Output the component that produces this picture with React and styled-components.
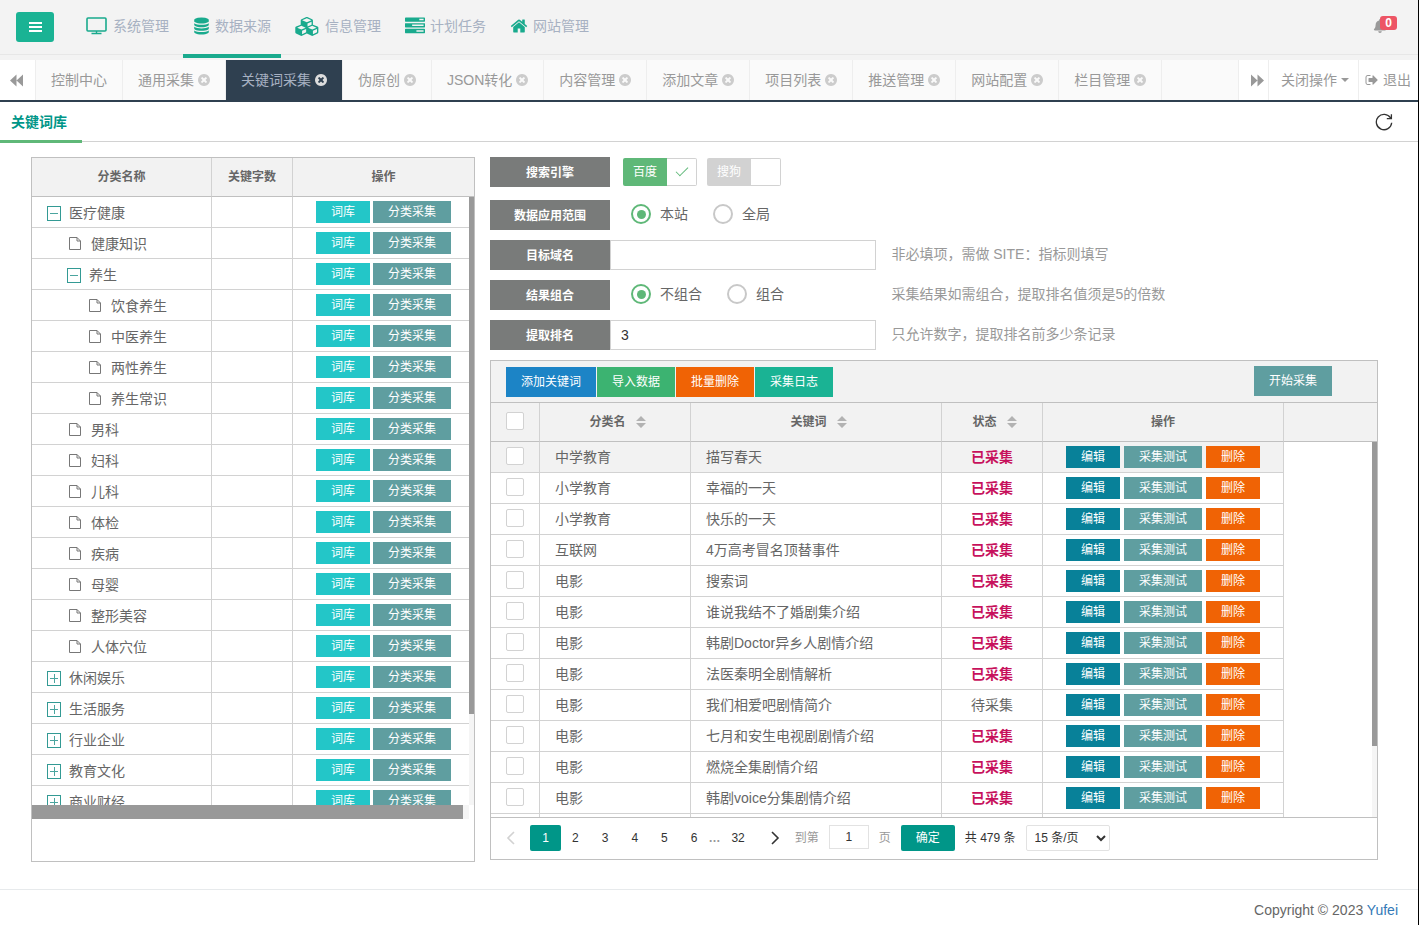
import React from "react";
import styled, { createGlobalStyle, css } from "styled-components";
import { FaBell } from "react-icons/fa";

const GlobalStyle = createGlobalStyle`
  *, *::before, *::after { box-sizing: border-box; }
  body {
    margin: 0;
    background: #fff;
    color: #666;
    font: 14px/20px "Liberation Sans", "Noto Sans CJK SC", sans-serif;
  }
  button, input, select { font: inherit; margin: 0; }
  button { cursor: pointer; }
`;

const ICONS = {
  database: [1792, "M896 768q237 0 443-43t325-127v170q0 69-103 128t-280 93.5-385 34.5-385-34.5-280-93.5-103-128v-170q119 84 325 127t443 43zm0 768q237 0 443-43t325-127v170q0 69-103 128t-280 93.5-385 34.5-385-34.5-280-93.5-103-128v-170q119 84 325 127t443 43zm0-384q237 0 443-43t325-127v170q0 69-103 128t-280 93.5-385 34.5-385-34.5-280-93.5-103-128v-170q119 84 325 127t443 43zm0-1152q208 0 385 34.5t280 93.5 103 128v128q0 69-103 128t-280 93.5-385 34.5-385-34.5-280-93.5-103-128v-128q0-69 103-128t280-93.5 385-34.5z"],
  cubes: [2304, "M640 1632l384-192v-314l-384 164v342zm-64-454l404-173-404-173-404 173zm1088 454l384-192v-314l-384 164v342zm-64-454l404-173-404-173-404 173zm-448-293l384-165v-266l-384 164v267zm-64-379l441-189-441-189-441 189zm1088 518v416q0 36-19 67t-52 47l-448 224q-25 14-57 14t-57-14l-448-224q-4-2-7-4-2 2-7 4l-448 224q-25 14-57 14t-57-14l-448-224q-33-16-52-47t-19-67v-416q0-38 21.5-70t56.5-48l434-186v-400q0-38 21.5-70t56.5-48l448-192q23-10 50-10t50 10l448 192q35 16 56.5 48t21.5 70v400l434 186q36 16 57 48t21 70z"],
  tasks: [1792, "M1024 1408h640v-128h-640v128zm-384-512h1024v-128h-1024v128zm640-512h384v-128h-384v128zm512 832v256q0 26-19 45t-45 19h-1664q-26 0-45-19t-19-45v-256q0-26 19-45t45-19h1664q26 0 45 19t19 45zm0-512v256q0 26-19 45t-45 19h-1664q-26 0-45-19t-19-45v-256q0-26 19-45t45-19h1664q26 0 45 19t19 45zm0-512v256q0 26-19 45t-45 19h-1664q-26 0-45-19t-19-45v-256q0-26 19-45t45-19h1664q26 0 45 19t19 45z"],
  home: [1792, "M1472 992v480q0 26-19 45t-45 19h-384v-384h-256v384h-384q-26 0-45-19t-19-45v-480q0-1 .5-3t.5-3l575-474 575 474q1 2 1 6zm223-69l-62 74q-8 9-21 11h-3q-13 0-21-7l-692-577-692 577q-12 8-24 7-13-2-21-11l-62-74q-8-10-7-23.5t11-21.5l719-599q32-26 76-26t76 26l244 204v-195q0-14 9-23t23-9h192q14 0 23 9t9 23v408l219 182q10 8 11 21.5t-7 23.5z"],
  close: [1792, "M1277 1122q0-26-19-45l-181-181 181-181q19-19 19-45 0-27-19-46l-90-90q-19-19-46-19-26 0-45 19l-181 181-181-181q-19-19-45-19-27 0-46 19l-90 90q-19 19-19 46 0 26 19 45l181 181-181 181q-19 19-19 45 0 27 19 46l90 90q19 19 46 19 26 0 45-19l181-181 181 181q19 19 45 19 27 0 46-19l90-90q19-19 19-46zm387-226q0 209-103 385.5t-279.5 279.5-385.5 103-385.5-103-279.5-279.5-103-385.5 103-385.5 279.5-279.5 385.5-103 385.5 103 279.5 279.5 103 385.5z"],
  signOut: [1792, "M704 1440q0 4 1 20t.5 26.5-3 23.5-10 19.5-20.5 6.5h-320q-119 0-203.5-84.5t-84.5-203.5v-704q0-119 84.5-203.5t203.5-84.5h320q13 0 22.5 9.5t9.5 22.5q0 4 1 20t.5 26.5-3 23.5-10 19.5-20.5 6.5h-320q-66 0-113 47t-47 113v704q0 66 47 113t113 47h312l11.5 1 11.5 3 8 5.5 7 9 2 13.5zm928-544q0 26-19 45l-544 544q-19 19-45 19t-45-19-19-45v-288h-448q-26 0-45-19t-19-45v-384q0-26 19-45t45-19h448v-288q0-26 19-45t45-19 45 19l544 544q19 19 19 45z"],
};

const Glyph = ({ name, size, width, crop = 0 }) => {
  const [w, d] = ICONS[name];
  return (
    <svg
      width={width || size}
      height={size}
      viewBox={`${crop} ${crop} ${w - 2 * crop} ${1792 - 2 * crop}`}
      fill="currentColor"
      aria-hidden="true"
    >
      <path d={d} />
    </svg>
  );
};

const MonitorIcon = () => (
  <svg width="22" height="18" viewBox="0 0 22 18" fill="none" stroke="currentColor" aria-hidden="true">
    <rect x="1" y="1" width="19" height="13" rx="1" strokeWidth="1.6" />
    <path d="M10.500 14v2.500M5.500 16.500h10" strokeWidth="1.400" />
  </svg>
);

const Backward = () => (
  <svg width="13" height="13" viewBox="0 0 13 13" fill="currentColor" aria-hidden="true">
    <path d="M6.500 0.500v12L0 6.500zM13 0.500v12L6.500 6.500z" />
  </svg>
);
const Forward = () => (
  <svg width="13" height="13" viewBox="0 0 13 13" fill="currentColor" aria-hidden="true">
    <path d="M0 0.500v12L6.500 6.500zM6.500 0.500v12L13 6.500z" />
  </svg>
);
const RefreshIcon = () => (
  <svg width="18" height="18" viewBox="0 0 18 18" fill="none" stroke="currentColor" strokeWidth="1.300" aria-hidden="true">
    <path d="M15.600 5A7.700 7.700 0 1 0 16.700 9.800M16.400 1.200V5.700H11.800" />
  </svg>
);
const FileIcon = () => (
  <svg width="12" height="14" viewBox="0 0 12 14" fill="none" stroke="#777" aria-hidden="true">
    <path d="M0.500 0.500H8L11.500 4V12.500H0.500zM8 0.500V4H11.500" />
  </svg>
);
const Chevron = ({ d }) => (
  <svg width="10" height="14" viewBox="0 0 10 14" fill="none" stroke="currentColor" strokeWidth="1.600" aria-hidden="true">
    <path d={d} />
  </svg>
);
const SortIcon = () => (
  <svg width="10" height="12" viewBox="0 0 10 12" fill="#b2b2b2" aria-hidden="true">
    <path d="M5 0L10 5H0zM5 12L10 7H0z" />
  </svg>
);

const Page = styled.div`
  border-right: 1px solid #000;
  min-height: 100vh;
`;

const Header = styled.header`
  height: 60px;
  padding: 0 21px 0 16px;
  background: linear-gradient(#e7e7e7, #e7e7e7) 0 54px / 100% 1px no-repeat #f3f3f3;
  display: flex;
  align-items: flex-start;
`;
const MenuButton = styled.button`
  width: 38px;
  height: 30px;
  margin: 12px 22px 0 0;
  padding: 0;
  border: 0;
  border-radius: 3px;
  background: #1ab394;
  display: flex;
  flex-direction: column;
  align-items: center;
  justify-content: center;
  gap: 2px;
`;
const MenuLine = styled.span`
  width: 13px;
  height: 2px;
  background: #fff;
`;
const Nav = styled.nav`
  display: flex;
  gap: 4px;
  flex: 1;
`;
const NavItem = styled.a`
  height: 58px;
  padding: 0 10px 2px;
  display: flex;
  align-items: center;
  gap: 5px;
  color: #a7b1c2;
  text-decoration: none;
  white-space: nowrap;
  border-bottom: 4px solid ${(p) => (p.$active ? "#19aa8d" : "transparent")};
  svg { color: #19aa8d; flex: none; }
`;
const Bell = styled.a`
  position: relative;
  margin-top: 19px;
  width: 24px;
  height: 14px;
  color: #999;
  svg { display: block; }
`;
const Badge = styled.span`
  position: absolute;
  left: 7px;
  top: -3px;
  width: 17px;
  height: 14px;
  border-radius: 3px;
  background: #ed5565;
  color: #fff;
  font: bold 12px/14px "Liberation Sans", sans-serif;
  text-align: center;
`;

const TabBar = styled.div`
  display: flex;
  height: 42px;
  background: #fafafa;
  border-bottom: 2px solid #2f4050;
  color: #999;
`;
const TabEdge = styled.button`
  border: 0;
  border-right: ${(p) => (p.$end ? 0 : "1px solid #eee")};
  background: #fff;
  color: #999;
  height: 40px;
  padding: ${(p) => p.$pad};
  display: flex;
  align-items: center;
  gap: 4px;
  white-space: nowrap;
`;
const TabList = styled.div`
  display: flex;
  flex: 1;
  min-width: 0;
  overflow: hidden;
  border-right: 1px solid #eee;
`;
const Tab = styled.a`
  flex: none;
  height: 40px;
  padding: 0 15px;
  display: flex;
  align-items: center;
  gap: 4px;
  border-right: 1px solid #eee;
  text-decoration: none;
  white-space: nowrap;
  color: ${(p) => (p.$active ? "#a7b1c2" : "#999")};
  background: ${(p) => (p.$active ? "#2f4050" : "#fafafa")};
  svg { color: ${(p) => (p.$active ? "#ddd" : "#ccc")}; }
`;
const Caret = styled.span`
  border: 4px solid transparent;
  border-top-color: currentColor;
  border-bottom: 0;
`;

const SubTabs = styled.div`
  display: flex;
  justify-content: space-between;
  align-items: flex-start;
  height: 40px;
  border-bottom: 1px solid #d2d2d2;
  padding-right: 25px;
`;
const SubTab = styled.a`
  height: 41px;
  padding: 10px 15px 0 11px;
  border-bottom: 3px solid #5fb878;
  color: #009688;
  font-weight: bold;
  text-decoration: none;
`;
const IconButton = styled.button`
  border: 0;
  padding: 0;
  margin-top: 11px;
  background: none;
  color: #333;
  display: flex;
`;

const Main = styled.main`
  display: grid;
  grid-template-columns: minmax(0, 1fr) minmax(0, 2fr);
  gap: 15px;
  padding: 15px 40px 27px 31px;
`;
const Panel = styled.section`
  border: 1px solid #c0c0c0;
`;
const LeftPanel = styled(Panel)`
  padding-bottom: 42px;
`;
const ScrollBox = styled.div`
  position: relative;
  height: ${(p) => p.$height};
  overflow: hidden;
`;
const VTrack = styled.div`
  position: absolute;
  top: 39px;
  right: 0;
  bottom: 0;
  width: 5px;
  background: #f5f5f5;
`;
const VThumb = styled.div`
  height: ${(p) => p.$size};
  background: #999;
`;
const HTrack = styled.div`
  height: 14px;
  margin-right: 5px;
  background: #f5f5f5;
`;
const HThumb = styled.div`
  width: calc(100% - 6px);
  height: 14px;
  background: #999;
`;

const Table = styled.table`
  width: 100%;
  table-layout: fixed;
  border-collapse: separate;
  border-spacing: 0;
`;
const Th = styled.th`
  width: ${(p) => p.$w || "auto"};
  height: 39px;
  padding: 0;
  background: #f2f2f2;
  border-bottom: 1px solid #c0c0c0;
  border-right: ${(p) => (p.$last ? 0 : "1px solid #d2d2d2")};
  font-size: 12px;
`;
const Sortable = styled.span`
  display: flex;
  justify-content: center;
  align-items: center;
  gap: 10px;
  padding-left: 5px;
`;
const Td = styled.td`
  height: 31px;
  padding: ${(p) => (p.$center ? 0 : "0 15px")};
  text-align: ${(p) => (p.$center ? "center" : "left")};
  border-bottom: 1px solid #d2d2d2;
  border-right: ${(p) => (p.$last ? 0 : "1px solid #d2d2d2")};
  background: ${(p) => (p.$hover ? "#f2f2f2" : "#fff")};
  white-space: nowrap;
`;
const TreeCell = styled.div`
  display: flex;
  align-items: center;
  height: 30px;
  gap: ${(p) => (p.$leaf ? "10px" : "8px")};
  padding: 2px 0 0 ${(p) => p.$level * 20 + (p.$leaf ? 2 : 0)}px;
`;
const Toggle = styled.button`
  position: relative;
  width: 14px;
  height: 15px;
  padding: 0;
  border: 1px solid #339a94;
  background: #fff;
  &::before, &::after {
    content: "";
    position: absolute;
    background: #4ba59f;
  }
  &::before { left: 2px; right: 2px; top: 6px; height: 1px; }
  ${(p) => !p.$open && css`&::after { top: 2px; bottom: 2px; left: 6px; width: 1px; }`}
`;
const Actions = styled.div`
  display: flex;
  justify-content: center;
  gap: ${(p) => p.$gap};
`;
const Button = styled.button`
  border: 0;
  padding: 0 15px;
  height: ${(p) => (p.$small ? "22px" : "30px")};
  line-height: ${(p) => (p.$small ? "22px" : "30px")};
  font-size: 12px;
  color: #fff;
  white-space: nowrap;
  background: ${(p) => p.$bg};
`;

const FormRow = styled.div`
  display: flex;
  align-items: center;
  height: 30px;
  margin-bottom: ${(p) => (p.$first ? "13px" : "10px")};
`;
const FieldLabel = styled.label`
  flex: none;
  width: 120px;
  height: 30px;
  line-height: 32px;
  background: #797b7a;
  color: #fff;
  font-size: 12px;
  font-weight: bold;
  text-align: center;
`;
const Field = styled.div`
  flex: none;
  width: 30%;
  display: flex;
  align-items: center;
`;
const TextInput = styled.input`
  width: 100%;
  height: 30px;
  border: 1px solid #d2d2d2;
  padding: 0 10px;
  color: #333;
  background: #fff;
`;
const Hint = styled.span`
  margin-left: 15px;
  padding-bottom: 2px;
  color: #999;
`;
const Switch = styled.label`
  display: flex;
  height: 28px;
  margin-left: ${(p) => (p.$first ? "13px" : "10px")};
  line-height: 28px;
  font-size: 12px;
  color: #fff;
`;
const SwitchText = styled.span`
  width: 44px;
  text-align: center;
  border-radius: 2px 0 0 2px;
  background: ${(p) => (p.$on ? "#5fb878" : "#d2d2d2")};
`;
const SwitchBox = styled.input`
  appearance: none;
  width: 30px;
  height: 28px;
  border: 1px solid #d2d2d2;
  border-left: 0;
  border-radius: 0 2px 2px 0;
  display: grid;
  place-items: center;
  &:checked::after {
    content: "";
    width: 12px;
    height: 6px;
    margin-bottom: 4px;
    border: solid #5fb878;
    border-width: 0 0 1px 1px;
    transform: rotate(-45deg);
  }
`;
const RadioGroup = styled.div`
  display: flex;
  gap: 25px;
  padding: 0 0 2px 21px;
`;
const RadioLabel = styled.label`
  display: flex;
  align-items: center;
  gap: 9px;
  white-space: nowrap;
  height: 28px;
`;
const Radio = styled.input`
  appearance: none;
  width: 20px;
  height: 20px;
  border: 2px solid #c8c8c8;
  border-radius: 50%;
  display: grid;
  place-items: center;
  &:checked { border-color: #5fb878; }
  &:checked::after {
    content: "";
    width: 9px;
    height: 9px;
    border-radius: 50%;
    background: #5fb878;
  }
`;
const CheckBox = styled.input`
  appearance: none;
  display: block;
  width: 18px;
  height: 18px;
  border: 1px solid #d2d2d2;
  border-radius: 2px;
  background: #fff;
  && { margin: 0 0 2px 15px; }
`;

const Toolbar = styled.div`
  display: flex;
  justify-content: space-between;
  height: 42px;
  padding: 6px 45px 0 15px;
  background: #f2f2f2;
  border-bottom: 1px solid #c0c0c0;
`;
const ToolGroup = styled.div`
  display: flex;
  gap: 1px;
`;
const ToolEnd = styled.div`
  margin-top: -1px;
`;
const Status = styled.span`
  color: ${(p) => (p.$done ? "#c7115c" : "#666")};
  font-weight: ${(p) => (p.$done ? "bold" : "normal")};
`;

const Pager = styled.div`
  display: flex;
  align-items: flex-start;
  height: 42px;
  padding: 7px 15px 0;
  border-top: 1px solid #c0c0c0;
  font-size: 12px;
  line-height: 26px;
  color: #333;
  white-space: nowrap;
`;
const PageLink = styled.button`
  height: 26px;
  min-width: ${(p) => (p.$active ? "31px" : "0")};
  padding: 0 12px 0 ${(p) => (p.$active ? "12px" : "11px")};
  border: 0;
  border-radius: ${(p) => (p.$active ? "2px" : 0)};
  font-size: 12px;
  background: ${(p) => (p.$active ? "#009688" : "none")};
  color: ${(p) => (p.$active ? "#fff" : "#333")};
`;
const PageArrow = styled.button`
  display: flex;
  align-items: center;
  height: 26px;
  border: 0;
  background: none;
  padding: ${(p) => p.$pad};
  color: ${(p) => (p.$off ? "#d2d2d2" : "#333")};
`;
const Dots = styled.span`
  color: #999;
  font-weight: bold;
  margin-left: -1px;
`;
const SkipLabel = styled.label`
  display: flex;
  gap: 10px;
  color: #999;
`;
const SkipInput = styled.input`
  width: 40px;
  height: 24px;
  border: 1px solid #e2e2e2;
  padding: 0;
  text-align: center;
  color: #333;
  background: #fff;
`;
const Confirm = styled(Button)`
  height: 26px;
  line-height: 26px;
  border-radius: 2px;
  margin: 0 10px;
`;
const PageSize = styled.select`
  width: 84px;
  height: 26px;
  margin-left: 10px;
  padding: 0 4px;
  border: 1px solid #e2e2e2;
  border-radius: 2px;
  background: #fff;
  color: #333;
`;

const Footer = styled.footer`
  border-top: 1px solid #e7eaec;
  padding: 10px 20px 5px;
  text-align: right;
  a { color: #337ab7; text-decoration: none; }
`;

const NAV = [
  ["系统管理", <MonitorIcon />],
  ["数据来源", <Glyph name="database" size={20} width={17} />],
  ["信息管理", <Glyph name="cubes" size={19} width={25} />],
  ["计划任务", <Glyph name="tasks" size={20} />],
  ["网站管理", <Glyph name="home" size={18} />],
];
const TABS = ["控制中心", "通用采集", "关键词采集", "伪原创", "JSON转化", "内容管理", "添加文章", "项目列表", "推送管理", "网站配置", "栏目管理"];

// [name, level, state]
const TREE = [
  ["医疗健康", 0, "open"], ["健康知识", 1], ["养生", 1, "open"], ["饮食养生", 2], ["中医养生", 2],
  ["两性养生", 2], ["养生常识", 2], ["男科", 1], ["妇科", 1], ["儿科", 1], ["体检", 1], ["疾病", 1],
  ["母婴", 1], ["整形美容", 1], ["人体穴位", 1], ["休闲娱乐", 0, "shut"], ["生活服务", 0, "shut"],
  ["行业企业", 0, "shut"], ["教育文化", 0, "shut"], ["商业财经", 0, "shut"],
];
const ROWS = [
  ["中学教育", "描写春天"], ["小学教育", "幸福的一天"], ["小学教育", "快乐的一天"],
  ["互联网", "4万高考冒名顶替事件"], ["电影", "搜索词"], ["电影", "谁说我结不了婚剧集介绍"],
  ["电影", "韩剧Doctor异乡人剧情介绍"], ["电影", "法医秦明全剧情解析"], ["电影", "我们相爱吧剧情简介", "待采集"],
  ["电影", "七月和安生电视剧剧情介绍"], ["电影", "燃烧全集剧情介绍"], ["电影", "韩剧voice分集剧情介绍"],
];

function CategoryPanel() {
  return (
    <LeftPanel>
      <ScrollBox $height="647px">
        <Table>
          <thead>
            <tr>
              <Th $w="180px">分类名称</Th>
              <Th $w="81px">关键字数</Th>
              <Th $last>操作</Th>
            </tr>
          </thead>
          <tbody>
            {TREE.map(([name, level, state]) => (
              <tr key={name}>
                <Td>
                  <TreeCell $level={level} $leaf={!state}>
                    {state ? <Toggle $open={state === "open"} aria-label={name} /> : <FileIcon />}
                    {name}
                  </TreeCell>
                </Td>
                <Td />
                <Td $center $last>
                  <Actions $gap="3px">
                    <Button $small $bg="#23c6c8">词库</Button>
                    <Button $small $bg="#5f9ea0">分类采集</Button>
                  </Actions>
                </Td>
              </tr>
            ))}
          </tbody>
        </Table>
        <VTrack><VThumb $size="85%" /></VTrack>
      </ScrollBox>
      <HTrack><HThumb /></HTrack>
    </LeftPanel>
  );
}

function SearchForm() {
  return (
    <form>
      <FormRow $first>
        <FieldLabel as="span">搜索引擎</FieldLabel>
        <Switch $first><SwitchText $on>百度</SwitchText><SwitchBox type="checkbox" defaultChecked /></Switch>
        <Switch><SwitchText>搜狗</SwitchText><SwitchBox type="checkbox" /></Switch>
      </FormRow>
      <FormRow>
        <FieldLabel as="span">数据应用范围</FieldLabel>
        <Field>
          <RadioGroup>
            <RadioLabel><Radio type="radio" name="scope" defaultChecked />本站</RadioLabel>
            <RadioLabel><Radio type="radio" name="scope" />全局</RadioLabel>
          </RadioGroup>
        </Field>
      </FormRow>
      <FormRow>
        <FieldLabel htmlFor="domain">目标域名</FieldLabel>
        <Field><TextInput id="domain" /></Field>
        <Hint>非必填项，需做 SITE：指标则填写</Hint>
      </FormRow>
      <FormRow>
        <FieldLabel as="span">结果组合</FieldLabel>
        <Field>
          <RadioGroup>
            <RadioLabel><Radio type="radio" name="combine" defaultChecked />不组合</RadioLabel>
            <RadioLabel><Radio type="radio" name="combine" />组合</RadioLabel>
          </RadioGroup>
        </Field>
        <Hint>采集结果如需组合，提取排名值须是5的倍数</Hint>
      </FormRow>
      <FormRow>
        <FieldLabel htmlFor="rank">提取排名</FieldLabel>
        <Field><TextInput id="rank" defaultValue="3" /></Field>
        <Hint>只允许数字，提取排名前多少条记录</Hint>
      </FormRow>
    </form>
  );
}

function KeywordPanel() {
  return (
    <Panel>
      <Toolbar>
        <ToolGroup>
          <Button $bg="#1c84c6">添加关键词</Button>
          <Button $bg="#3cb371">导入数据</Button>
          <Button $bg="#f06305">批量删除</Button>
          <Button $bg="#1ab394">采集日志</Button>
        </ToolGroup>
        <ToolEnd><Button $bg="#5f9ea0">开始采集</Button></ToolEnd>
      </Toolbar>
      <ScrollBox $height="414px">
        <Table>
          <thead>
            <tr>
              <Th $w="49px"><CheckBox type="checkbox" aria-label="全选" /></Th>
              <Th $w="151px"><Sortable>分类名<SortIcon /></Sortable></Th>
              <Th $w="251px"><Sortable>关键词<SortIcon /></Sortable></Th>
              <Th $w="101px"><Sortable>状态<SortIcon /></Sortable></Th>
              <Th $w="241px">操作</Th>
              <Th $last />
            </tr>
          </thead>
          <tbody>
            {ROWS.map(([cat, word, status = "已采集"], i) => (
              <tr key={i}>
                <Td $center $hover={i === 0}><CheckBox type="checkbox" aria-label={word} /></Td>
                <Td $hover={i === 0}>{cat}</Td>
                <Td $hover={i === 0}>{word}</Td>
                <Td $center $hover={i === 0}><Status $done={status === "已采集"}>{status}</Status></Td>
                <Td $center $hover={i === 0}>
                  <Actions $gap="4px">
                    <Button $small $bg="#088199">编辑</Button>
                    <Button $small $bg="#5f9ea0">采集测试</Button>
                    <Button $small $bg="#f06305">删除</Button>
                  </Actions>
                </Td>
              </tr>
            ))}
            <tr><Td /><Td /><Td /><Td /><Td /></tr>
          </tbody>
        </Table>
        <VTrack><VThumb $size="81%" /></VTrack>
      </ScrollBox>
      <Pager>
        <PageArrow $off $pad="0 14px 0 0" aria-label="上一页"><Chevron d="M8 1L2 7L8 13" /></PageArrow>
        <PageLink $active>1</PageLink>
        {[2, 3, 4, 5, 6].map((n) => <PageLink key={n}>{n}</PageLink>)}
        <Dots>…</Dots>
        <PageLink>32</PageLink>
        <PageArrow $pad="0 15px 0 13px" aria-label="下一页"><Chevron d="M2 1L8 7L2 13" /></PageArrow>
        <SkipLabel>到第<SkipInput defaultValue="1" />页</SkipLabel>
        <Confirm $bg="#009688">确定</Confirm>
        <span>共 479 条</span>
        <PageSize aria-label="每页条数" defaultValue="15">
          <option value="15">15 条/页</option>
          <option value="30">30 条/页</option>
        </PageSize>
      </Pager>
    </Panel>
  );
}

export default function App() {
  return (
    <Page>
      <GlobalStyle />
      <Header>
        <MenuButton aria-label="菜单"><MenuLine /><MenuLine /><MenuLine /></MenuButton>
        <Nav>
          {NAV.map(([label, icon], i) => (
            <NavItem key={label} href="#" $active={i === 1}>{icon}{label}</NavItem>
          ))}
        </Nav>
        <Bell href="#"><FaBell size={14} /><Badge>0</Badge></Bell>
      </Header>
      <TabBar>
        <TabEdge $pad="0 12px 0 10px" aria-label="向左"><Backward /></TabEdge>
        <TabList>
          {TABS.map((t, i) => (
            <Tab key={t} href="#" $active={i === 2}>
              {t}
              {i > 0 && <Glyph name="close" size={12} crop={128} />}
            </Tab>
          ))}
        </TabList>
        <TabEdge $pad="0 4px 0 12px" aria-label="向右"><Forward /></TabEdge>
        <TabEdge $pad="0 9px 0 12px">关闭操作<Caret /></TabEdge>
        <TabEdge $pad="0 7px 0 6px" $end><Glyph name="signOut" size={14} />退出</TabEdge>
      </TabBar>
      <SubTabs>
        <SubTab href="#">关键词库</SubTab>
        <IconButton aria-label="刷新"><RefreshIcon /></IconButton>
      </SubTabs>
      <Main>
        <CategoryPanel />
        <div>
          <SearchForm />
          <KeywordPanel />
        </div>
      </Main>
      <Footer>Copyright © 2023 <a href="#">Yufei</a></Footer>
    </Page>
  );
}
